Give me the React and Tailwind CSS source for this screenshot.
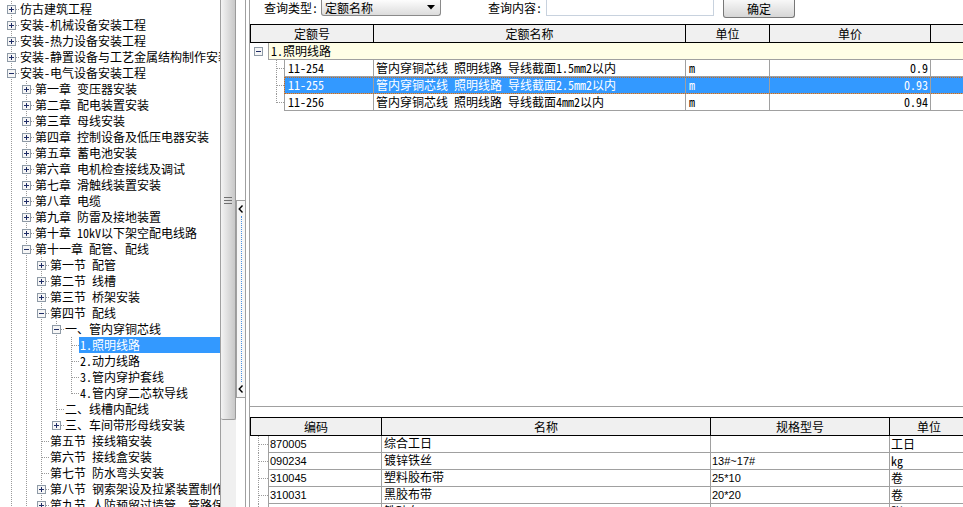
import React from "react";

const CN = "font-['Noto_Sans_Mono_CJK_SC','Noto_Sans_CJK_SC',monospace]";
const SANS = "font-['Liberation_Sans','Noto_Sans_CJK_SC',sans-serif]";

const TREE = [
  [0, "仿古建筑工程", "+"],
  [0, "安装-机械设备安装工程", "+"],
  [0, "安装-热力设备安装工程", "+"],
  [0, "安装-静置设备与工艺金属结构制作安装工程", "+"],
  [0, "安装-电气设备安装工程", "-"],
  [1, "第一章 变压器安装", "+"],
  [1, "第二章 配电装置安装", "+"],
  [1, "第三章 母线安装", "+"],
  [1, "第四章 控制设备及低压电器安装", "+"],
  [1, "第五章 蓄电池安装", "+"],
  [1, "第六章 电机检查接线及调试", "+"],
  [1, "第七章 滑触线装置安装", "+"],
  [1, "第八章 电缆", "+"],
  [1, "第九章 防雷及接地装置", "+"],
  [1, "第十章 10kV以下架空配电线路", "+"],
  [1, "第十一章 配管、配线", "-"],
  [2, "第一节 配管", "+"],
  [2, "第二节 线槽", "+"],
  [2, "第三节 桥架安装", "+"],
  [2, "第四节 配线", "-"],
  [3, "一、管内穿铜芯线", "-"],
  [4, "1.照明线路", null, true],
  [4, "2.动力线路"],
  [4, "3.管内穿护套线"],
  [4, "4.管内穿二芯软导线"],
  [3, "二、线槽内配线"],
  [3, "三、车间带形母线安装", "+"],
  [2, "第五节 接线箱安装"],
  [2, "第六节 接线盒安装"],
  [2, "第七节 防水弯头安装"],
  [2, "第八节 钢索架设及拉紧装置制作安装", "+"],
  [2, "第九节 人防预留过墙管、管路保护", "+"],
];

// next sibling at the same level? (rows running past the bottom are taken as continuing)
const hasNext = TREE.map(([level], i) => {
  for (let j = i + 1; j < TREE.length; j++) {
    const l = TREE[j][0];
    if (l < level) return false;
    if (l === level) return true;
  }
  return level <= 2;
});

const ROWS = TREE.map(([level, text, kind, selected], i) => {
  const guides = [];
  for (let k = 0; k < level; k++) {
    let a = i - 1;
    while (a >= 0 && TREE[a][0] !== k) a--;
    guides.push(a >= 0 ? hasNext[a] : false);
  }
  return { level, text, kind, selected, guides, next: hasNext[i] };
});

const QUOTA = [
  ["11-254", "管内穿铜芯线 照明线路 导线截面1.5mm2以内", "m", "0.9"],
  ["11-255", "管内穿铜芯线 照明线路 导线截面2.5mm2以内", "m", "0.93", true],
  ["11-256", "管内穿铜芯线 照明线路 导线截面4mm2以内", "m", "0.94"],
];

const MATS = [
  ["870005", "综合工日", "", "工日"],
  ["090234", "镀锌铁丝", "13#~17#", "kg"],
  ["310045", "塑料胶布带", "25*10", "卷"],
  ["310031", "黑胶布带", "20*20", "卷"],
  ["510127", "铁砂布", "0~2#", "张"],
];

const DOT = { stroke: "#9a9a9a", strokeDasharray: "1 1" };

function Box({ x, y, plus }) {
  return (
    <g>
      <rect x={x} y={y} width="8" height="8" fill="#f6f6f6" stroke="#8e9aa6" />
      <rect x={x + 1.5} y={y + 3.5} width="5" height="1" fill="#1f2d66" />
      {plus && <rect x={x + 3.5} y={y + 1.5} width="1" height="5" fill="#1f2d66" />}
    </g>
  );
}

function Cell({ guide, own, kind, next }) {
  return (
    <svg width="15" height="16" className="block shrink-0" shapeRendering="crispEdges">
      {guide && <line x1="7.5" y1="0" x2="7.5" y2="16" {...DOT} />}
      {own && (
        <>
          <line x1="7.5" y1="0" x2="7.5" y2={next ? 16 : 8.5} {...DOT} />
          <line x1="7.5" y1="8.5" x2="15" y2="8.5" {...DOT} />
          {kind && <Box x={3.5} y={4.5} plus={kind === "+"} />}
        </>
      )}
    </svg>
  );
}

function Tree() {
  return (
    <div className={`w-[220px] shrink-0 overflow-hidden bg-white pt-[1px] ${CN}`}>
      {ROWS.map((r, i) => (
        <div key={i} className="flex h-[16px]">
          <div className="w-[4px] shrink-0" />
          {r.guides.map((g, k) => (
            <Cell key={k} guide={g} />
          ))}
          <Cell own kind={r.kind} next={r.next} />
          <div
            className={`min-w-0 flex-1 overflow-hidden whitespace-nowrap pl-[1px] text-[12px] leading-[16px] ${
              r.selected ? "bg-[#3399ff] text-white" : "text-black"
            }`}
          >
            {r.text}
          </div>
        </div>
      ))}
    </div>
  );
}

function Scrollbar() {
  return (
    <div className="flex w-[16px] shrink-0 flex-col border-l border-[#a0a0a0] bg-[#f0f0f0]">
      <div className="flex h-[420px] flex-col items-center gap-[2px] rounded-b-[2px] border border-t-0 border-l-0 border-[#9b9b9b] bg-linear-to-r from-[#f4f4f4] to-[#c8c8c8] pt-[197px]">
        <div className="h-[1px] w-[8px] bg-[#707070]" />
        <div className="h-[1px] w-[8px] bg-[#707070]" />
        <div className="h-[1px] w-[8px] bg-[#707070]" />
      </div>
    </div>
  );
}

function Chevron() {
  return (
    <svg width="6" height="8" className="block">
      <path d="M4.5 0.5 L1.2 4 L4.5 7.5" fill="none" stroke="#000" strokeWidth="1.4" />
    </svg>
  );
}

function Splitter() {
  return (
    <div className="flex w-[13px] shrink-0 bg-white">
      <div className="w-[10px] border-r border-[#a0a0a0] pt-[200px]">
        <div className="flex h-[198px] flex-col items-center border border-r-0 border-[#a0a0a0] bg-[#f7f7f7] py-[4px]">
          <Chevron />
          <div className="my-[3px] w-0 flex-1 border-l border-dotted border-[#4a90e2]" />
          <Chevron />
        </div>
      </div>
    </div>
  );
}

function Toolbar() {
  return (
    <div className="flex h-[24px] items-start text-[12px] leading-[14px]">
      <div className="ml-[14px] w-[57px] pt-[1px]">查询类型:</div>
      <div className="flex h-[16px] w-[120px] items-center rounded-b-[3px] border border-t-0 border-[#8a8a8a] bg-linear-to-b from-[#fdfdfd] to-[#dcdcdc] pl-[3px] pr-[5px]">
        <span className="flex-1">定额名称</span>
        <svg width="8" height="5" className="block">
          <polygon points="0,0 8,0 4,4.5" fill="#000" />
        </svg>
      </div>
      <div className="ml-[47px] w-[58px] pt-[1px]">查询内容:</div>
      <div className="h-[16px] w-[168px] border border-t-0 border-[#c8d2de] bg-white" />
      <button className="ml-[9px] h-[18px] w-[72px] rounded-b-[3px] border border-t-0 border-[#777] bg-linear-to-b from-[#f8f8f8] to-[#d6d6d6] text-[12px] leading-[16px]">
        确定
      </button>
    </div>
  );
}

function QuotaGrid() {
  return (
    <div className={`flex h-[383px] flex-col border-b border-[#a0a0a0] text-[12px] leading-[16px] ${CN}`}>
      <div className="flex h-[19px] shrink-0 border-y border-black bg-[#f0f0f0] leading-[17px]">
        <div className="w-[123px] shrink-0 border-l border-black text-center">定额号</div>
        <div className="w-[312px] shrink-0 border-l border-black text-center">定额名称</div>
        <div className="w-[84px] shrink-0 border-l border-black text-center">单位</div>
        <div className="w-[161px] shrink-0 border-l border-black text-center">单价</div>
        <div className="w-[80px] shrink-0 border-l border-black" />
      </div>
      <div className="flex h-[17px] shrink-0">
        <svg width="18" height="17" className="block shrink-0" shapeRendering="crispEdges">
          <Box x={4.5} y={4.5} />
        </svg>
        <div className="flex-1 border-b border-l border-[#a0a0a0] bg-[#fffee6] pl-[2px]">1.照明线路</div>
      </div>
      {QUOTA.map(([code, name, unit, price, sel], i) => (
        <div key={code} className="flex h-[17px] shrink-0">
          <svg width="34" height="17" className="block shrink-0" shapeRendering="crispEdges">
            <line x1="26.5" y1="0" x2="26.5" y2={i === QUOTA.length - 1 ? 8.5 : 17} {...DOT} />
            <line x1="26.5" y1="8.5" x2="34" y2="8.5" {...DOT} />
          </svg>
          <div
            className={`flex flex-1 border-b border-[#a0a0a0] ${
              sel ? "bg-[#3399ff] text-white outline-1 outline-dotted outline-[#c8691e] -outline-offset-1" : "text-black"
            }`}
          >
            <div className="w-[89px] shrink-0 border-l border-[#a0a0a0] pl-[3px]">{code}</div>
            <div className="w-[312px] shrink-0 overflow-hidden whitespace-nowrap border-l border-[#a0a0a0] pl-[2px]">{name}</div>
            <div className="w-[84px] shrink-0 border-l border-[#a0a0a0] pl-[3px]">{unit}</div>
            <div className="w-[161px] shrink-0 border-l border-[#a0a0a0] pr-[2px] text-right">{price}</div>
            <div className="w-[80px] shrink-0 border-l border-[#a0a0a0]" />
          </div>
        </div>
      ))}
      <div className="flex-1" />
    </div>
  );
}

function MaterialGrid() {
  return (
    <div className={`flex-1 overflow-hidden text-[12px] leading-[16px] ${SANS}`}>
      <div className={`flex h-[19px] border-y border-black bg-[#f0f0f0] leading-[17px] ${CN}`}>
        <div className="w-[131px] shrink-0 border-l border-black text-center">编码</div>
        <div className="w-[329px] shrink-0 border-l border-black text-center">名称</div>
        <div className="w-[179px] shrink-0 border-l border-black text-center">规格型号</div>
        <div className="w-[120px] shrink-0 border-l border-black pl-[27px]">单位</div>
      </div>
      {MATS.map(([code, name, spec, unit]) => (
        <div key={code} className="flex h-[17px]">
          <svg width="18" height="17" className="block shrink-0" shapeRendering="crispEdges">
            <line x1="8.5" y1="0" x2="8.5" y2="17" {...DOT} />
            <line x1="8.5" y1="8.5" x2="18" y2="8.5" {...DOT} />
          </svg>
          <div className="flex flex-1 border-b border-[#a0a0a0]">
            <div className="w-[113px] shrink-0 border-l border-[#a0a0a0] pl-[1px] text-[11px]">{code}</div>
            <div className="w-[329px] shrink-0 border-l border-[#a0a0a0] pl-[2px]">{name}</div>
            <div className="w-[179px] shrink-0 border-l border-[#a0a0a0] pl-[1px] text-[11px]">{spec}</div>
            <div className={`w-[120px] shrink-0 border-l border-[#a0a0a0] pl-[1px] ${CN}`}>{unit}</div>
          </div>
        </div>
      ))}
    </div>
  );
}

export default function App() {
  return (
    <div className="flex h-[507px] w-[963px] overflow-hidden bg-white text-black">
      <Tree />
      <Scrollbar />
      <Splitter />
      <div className={`flex w-[714px] shrink-0 flex-col border-l border-[#a0a0a0] ${CN}`}>
        <Toolbar />
        <QuotaGrid />
        <div className="h-[10px] shrink-0" />
        <MaterialGrid />
      </div>
    </div>
  );
}
